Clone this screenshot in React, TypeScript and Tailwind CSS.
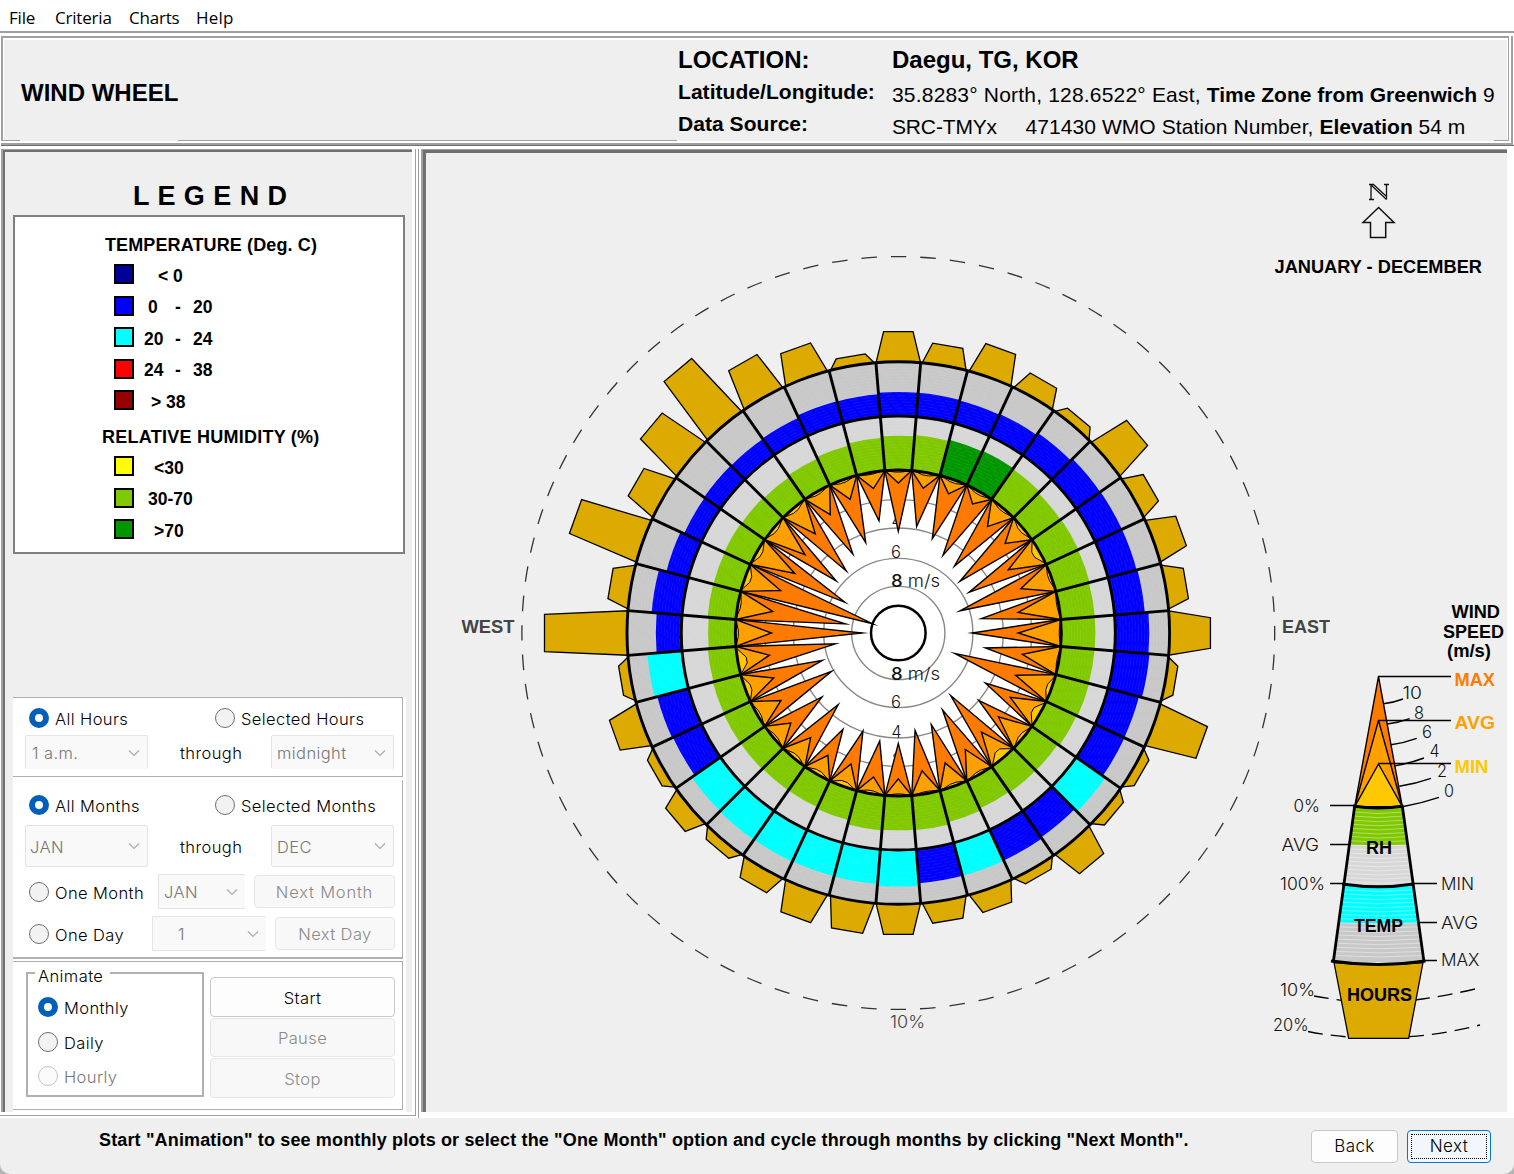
import React from "react";

const CX = 898.3;
const CY = 633;
const R_SPEED = 163;
const R_TEMP = 217;
const R_OUT = 271.3;

const BLUE = "#0000ff";
const CYAN = "#00ffff";
const GREEN = "#80c800";
const DARKGREEN = "#009600";
const GOLD = "#dcaa00";
const MAXC = "#ff7a00";
const AVGC = "#ffa000";
const MINC = "#ffc800";

type Sector = [hours: number, rh: number, temp: number, max: number, avg: number, min: number];

// One entry for every 10 degrees, clockwise from north; all values are radii.
const sectors: Sector[] = [
  [301.8, 197.3, 241, 98.7, 149, 161],
  [291.8, 198.7, 241, 105.3, 145.8, 160],
  [302.3, 200, 240.5, 97.2, 147, 160],
  [291.5, 201, 241.5, 86, 148, 160],
  [281.4, 200, 244, 83.7, 137.5, 160],
  [312, 198, 246.3, 76.2, 138, 159],
  [291.7, 198.5, 246.5, 77.6, 125, 156],
  [301, 198, 246.5, 60.8, 128.6, 160],
  [292.2, 197.2, 247.3, 80.5, 119.5, 161],
  [312.5, 197.1, 251, 69.3, 117.7, 161],
  [281.5, 197, 252, 84.7, 124, 161],
  [323, 197.5, 249, 55, 122.8, 158],
  [281, 196.5, 249.4, 97.4, 127.4, 155],
  [281.7, 194.5, 252.7, 102, 129, 159],
  [301.3, 194.5, 249.3, 77.6, 127.7, 154],
  [281.3, 193.5, 250.7, 85, 132.9, 160],
  [292, 195.7, 251, 94, 136.7, 160],
  [292.3, 198, 251.2, 95.7, 138.5, 161],
  [301.8, 197.3, 253.5, 108, 144.7, 161],
  [302.4, 198.2, 251.8, 106.9, 145, 160],
  [302.6, 193.8, 251.7, 101.3, 138, 158],
  [291.2, 192, 252, 108.4, 140, 159],
  [281.9, 192, 252.4, 90.2, 135, 159],
  [291.2, 192.5, 251.9, 96.5, 139, 160],
  [281.3, 192.6, 248.3, 72.8, 133.8, 160],
  [301.8, 192, 249.3, 76.6, 130.9, 157],
  [281.7, 191.2, 251.8, 59.2, 129.1, 154],
  [354.3, 190.2, 242.5, 30, 124.9, 160],
  [292.4, 191.4, 247.5, 48.3, 125.6, 160],
  [343.6, 191.3, 240, 21, 123.2, 157],
  [302.9, 192, 236.2, 56.7, 117.3, 158],
  [322.7, 191.3, 237, 77, 119.7, 159],
  [343.6, 190.4, 236.6, 77, 127.5, 159],
  [312.3, 192.3, 237.3, 87.5, 135, 160],
  [303, 194, 239.8, 92.8, 140.8, 160],
  [281, 195.9, 239.5, 111.4, 145.5, 161],
];

const humid = [2, 3];
const warm = [13, 16, 18, 19, 20, 21, 22, 23, 26];

// The wheel's directions lean slightly towards the nearest compass axis.
function lean(deg: number) {
  const axis = Math.round(deg / 90) * 90;
  const d = deg - axis;
  return deg - Math.sign(d) * 0.3 * (1 - Math.abs(d) / 45);
}

function pt(deg: number, r: number) {
  const a = (deg * Math.PI) / 180;
  return `${(CX + r * Math.sin(a)).toFixed(2)},${(CY - r * Math.cos(a)).toFixed(2)}`;
}

function band(deg: number, r0: number, r1: number) {
  const a = lean(deg - 5);
  const b = lean(deg + 5);
  return `M${pt(a, r0)} A${r0} ${r0} 0 0 1 ${pt(b, r0)} L${pt(b, r1)} A${r1} ${r1} 0 0 0 ${pt(a, r1)}Z`;
}

// Pulls the tip back by the length of its mitered outline.
function spike(deg: number, tip: number) {
  const len = R_SPEED - tip;
  const inset = (0.65 * Math.hypot(14.2, len)) / 14.2;
  return `${pt(lean(deg - 5), R_SPEED)} ${pt(lean(deg), tip + inset)} ${pt(lean(deg + 5), R_SPEED)}`;
}

const SANS = "'Liberation Sans', Arial, sans-serif";
const LIGHT = "'Inter', 'Noto Sans', sans-serif";

function Bold({ x, x2, y, c = "#000", s = 18, children }: { x: number; x2: number; y: number; c?: string; s?: number; children: string }) {
  return (
    <text x={x} y={y} fontFamily={SANS} fontWeight={700} fontSize={s} fill={c} textLength={x2 - x} lengthAdjust="spacingAndGlyphs">
      {children}
    </text>
  );
}

function Thin({ x, x2, y, c = "#111", s = 17, children }: { x: number; x2: number; y: number; c?: string; s?: number; children: React.ReactNode }) {
  return (
    <text x={x} y={y} fontFamily={LIGHT} fontWeight={300} fontSize={s} fill={c} textLength={x2 - x} lengthAdjust="spacingAndGlyphs">
      {children}
    </text>
  );
}

function Wheel() {
  return (
    <g>
      <circle cx={CX} cy={CY} r={376.4} fill="none" stroke="#333" strokeWidth="1.3" strokeDasharray="15.5 14.06" strokeDashoffset="8" />
      <g fill={GOLD} stroke="#000" strokeWidth="1.3">
        {sectors.map((s, i) => {
          const h = i === 0 || i === 9 || i === 18 ? 2.8 : 3;
          const d = lean(i * 10);
          return <polygon key={i} points={`${pt(d - 4.7, R_OUT)} ${pt(d - h, s[0])} ${pt(d + h, s[0])} ${pt(d + 4.7, R_OUT)}`} />;
        })}
      </g>
      <circle cx={CX} cy={CY} r={R_OUT} fill="#c8c8c8" />
      {sectors.map((s, i) => (
        <path key={i} d={band(i * 10, R_TEMP, s[2])} fill={warm.includes(i) ? CYAN : BLUE} />
      ))}
      <circle cx={CX} cy={CY} r={R_TEMP} fill="#d7d7d7" />
      {sectors.map((s, i) => (
        <path key={i} d={band(i * 10, R_SPEED, s[1])} fill={humid.includes(i) ? DARKGREEN : GREEN} />
      ))}
      <g fill="none" stroke="#fff" strokeWidth="0.6" strokeOpacity="0.13" strokeDasharray="9 3">
        {Array.from({ length: 34 }, (_, i) => (
          <circle key={i} cx={CX} cy={CY} r={167 + i * 3.05} />
        ))}
      </g>
      <circle cx={CX} cy={CY} r={R_SPEED} fill="#fff" />
      <g fill="none" stroke="#888" strokeWidth="1.4">
        {[133.4, 105, 74.6, 46.6].map((r) => (
          <circle key={r} cx={CX} cy={CY} r={r} />
        ))}
      </g>
      <Thin x={892} x2={901} y={497.5}>2</Thin>
      <Thin x={891.5} x2={901.5} y={526.7}>4</Thin>
      <Thin x={891} x2={901} y={557.7}>6</Thin>
      <Thin x={891} x2={940} y={586.5}><tspan fontWeight={500}>8</tspan> m/s</Thin>
      <Thin x={891} x2={940} y={680}><tspan fontWeight={500}>8</tspan> m/s</Thin>
      <Thin x={891} x2={901} y={707.5}>6</Thin>
      <Thin x={891.5} x2={901.5} y={737.5}>4</Thin>
      <Thin x={892} x2={901} y={766}>2</Thin>
      <g stroke="#000" strokeWidth="1.4" strokeMiterlimit="30">
        {sectors.map((s, i) => (
          <g key={i}>
            <polygon points={spike(i * 10, s[3])} fill={MAXC} />
            <polygon points={spike(i * 10, s[4])} fill={AVGC} />
            <polygon
              points={`${pt(i * 10 - 4.8, R_SPEED)} ${pt(i * 10 - 1.2, s[5])} ${pt(i * 10 + 1, s[5])} ${pt(i * 10 + 4.8, R_SPEED)}`}
              fill={MINC}
              strokeWidth="1"
            />
          </g>
        ))}
      </g>
      <circle cx={CX} cy={CY} r={27.3} fill="none" stroke="#000" strokeWidth="2.5" />
      <g fill="none" stroke="#000" strokeWidth="2.9">
        <circle cx={CX} cy={CY} r={R_SPEED} />
        <circle cx={CX} cy={CY} r={R_TEMP} />
        <circle cx={CX} cy={CY} r={R_OUT} />
        {sectors.map((_, i) => (
          <path key={i} d={`M${pt(lean(i * 10 + 5), R_SPEED)} L${pt(lean(i * 10 + 5), R_OUT)}`} />
        ))}
      </g>
      <Bold x={461.5} x2={514.5} y={632.7} c="#444">WEST</Bold>
      <Bold x={1282} x2={1330} y={632.7} c="#444">EAST</Bold>
      <Thin x={890} x2={925} y={1028} c="#444">10%</Thin>
    </g>
  );
}

function Compass() {
  return (
    <g fill="none" stroke="#111" strokeWidth="1.3">
      <path d="M1369 184.5h5M1384 184.5h5M1369 199.5h5M1371 184.5v15M1386.500 184.5v15M1370.500 184.500L1386.500 199.500M1373.500 184.500L1386.500 196.500" />
      <path d="M1378.600 207.500L1394 222.500H1385.700V237.500H1370.500V222.500H1363Z" strokeWidth="1.5" />
    </g>
  );
}

const scaleTicks: [number, number, number, number][] = [
  [1383.3, 703.7, 1403, 699],
  [1387.3, 724, 1409.7, 718.7],
  [1391, 744.7, 1416.7, 738.3],
  [1395.3, 765.7, 1424, 758],
  [1399.3, 786.3, 1431, 778.3],
  [1402.3, 806.7, 1439, 797.3],
];

function Key() {
  return (
    <g>
      <g fill="none" stroke="#000" strokeWidth="1.3">
        <path d="M1330 805.500H1356M1330 844.500H1350M1330 883.500H1346M1412 883.500H1437M1418 922.500H1437M1423 960.500H1437" />
        <path d="M1314 996Q1328 998.500 1343 1000.500M1415 1000Q1445 996 1475 989M1308 1031.500Q1328 1035.500 1349 1037M1409 1036.700Q1445 1034 1480 1025" strokeDasharray="15 8" />
      </g>
      <path d="M1355 806L1349.500 845H1407.500L1402.300 806Z" fill={GREEN} />
      <path d="M1349.500 845L1344 884Q1378.500 890 1413 884L1407.500 845Z" fill="#d7d7d7" />
      <path d="M1344 884Q1378.500 890 1413 884L1418.500 923H1338.800Z" fill={CYAN} />
      <path d="M1338.800 923L1333.300 962H1424L1418.500 923Z" fill="#c8c8c8" />
      <g fill="none" stroke="#fff" strokeWidth="0.9" strokeOpacity="0.45">
        {Array.from({ length: 36 }, (_, i) => {
          const y = 812 + i * 4.1;
          const w = 24 + ((y - 806) * 21.3) / 156;
          return <path key={i} d={`M${1378.6 - w} ${y}Q1378.600 ${y + 3} ${1378.6 + w} ${y}`} />;
        })}
      </g>
      <path d="M1334 962.500Q1378.500 967 1423 962.500L1408.700 1038.300H1348.700Z" fill={GOLD} stroke="#000" strokeWidth="1.3" />
      <g stroke="#000" strokeWidth="1.4" strokeLinejoin="round">
        <path d="M1354.700 806.700L1378.500 676.500L1402.300 806.700Z" fill={MAXC} />
        <path d="M1354.700 806.700L1378.500 720.500L1402.300 806.700Z" fill={AVGC} />
        <path d="M1354.700 806.700L1378.500 764L1402.300 806.700Z" fill={MINC} />
        <path d="M1378.500 676.500H1451M1378.500 720.500H1451M1378.500 763.500H1451" fill="none" />
        {scaleTicks.map(([x1, y1, x2, y2]) => (
          <path key={y1} d={`M${x1} ${y1}Q${(x1 + x2) / 2} ${(y1 + y2) / 2 + 1.5} ${x2} ${y2}`} fill="none" />
        ))}
      </g>
      <g fill="none" stroke="#000" strokeWidth="2.8">
        <path d="M1354.700 806L1333.300 962M1402.300 806L1424 962" />
        <path d="M1353 806Q1378.500 810 1403.500 806M1342 884Q1378.500 889.500 1414 884M1331 961Q1378.500 968 1425.500 961" />
      </g>
      <Bold x={1366} x2={1392} y={853.5}>RH</Bold>
      <Bold x={1354} x2={1403} y={931.8}>TEMP</Bold>
      <Bold x={1347} x2={1412} y={1000.5}>HOURS</Bold>
      <Bold x={1451.500} x2={1500} y={617.7}>WIND</Bold>
      <Bold x={1443} x2={1504} y={638}>SPEED</Bold>
      <Bold x={1447} x2={1491} y={657}>(m/s)</Bold>
      <Bold x={1454.500} x2={1495} y={686} c={MAXC}>MAX</Bold>
      <Bold x={1454.500} x2={1495} y={728.7} c={AVGC}>AVG</Bold>
      <Bold x={1454.500} x2={1488.500} y={772.7} c={MINC}>MIN</Bold>
      <Thin x={1402.500} x2={1422} y={698.7}>10</Thin>
      <Thin x={1414} x2={1424} y={719}>8</Thin>
      <Thin x={1422} x2={1432} y={737.7}>6</Thin>
      <Thin x={1429.500} x2={1439.500} y={757.3}>4</Thin>
      <Thin x={1437} x2={1447} y={776.7}>2</Thin>
      <Thin x={1444} x2={1454} y={796.7}>0</Thin>
      <Thin x={1293.500} x2={1320} y={811.7}>0%</Thin>
      <Thin x={1281.500} x2={1319} y={850.7}>AVG</Thin>
      <Thin x={1280} x2={1325} y={889.5}>100%</Thin>
      <Thin x={1441} x2={1474} y={889.5}>MIN</Thin>
      <Thin x={1441} x2={1478} y={928.7}>AVG</Thin>
      <Thin x={1441} x2={1479.500} y={966.3}>MAX</Thin>
      <Thin x={1280} x2={1315} y={995.7}>10%</Thin>
      <Thin x={1273} x2={1308.500} y={1030.7}>20%</Thin>
    </g>
  );
}

function Radio({ on, off }: { on?: boolean; off?: boolean }) {
  if (on) return <span className="block size-5 shrink-0 rounded-full border-6 border-[#005fb8] bg-white" />;
  if (off) return <span className="block size-5 shrink-0 rounded-full border border-[#c4c4c4] bg-[#fafafa]" />;
  return <span className="block size-5 shrink-0 rounded-full border border-[#707070] bg-[#f2f2f2]" />;
}

function Choice({ label, on, off, className = "" }: { label: string; on?: boolean; off?: boolean; className?: string }) {
  return (
    <div className={`flex items-center gap-[6px] whitespace-nowrap ${off ? "text-[#777]" : "text-black"} ${className}`}>
      <Radio on={on} off={off} />
      <span className="relative top-px">{label}</span>
    </div>
  );
}

function Select({ label, className = "" }: { label: string; className?: string }) {
  return (
    <div className={`flex shrink-0 items-center justify-between rounded-[2px] border border-[#e4e4e4] bg-[#f9f9f9] pr-[7px] text-[#777] ${className}`}>
      <span className="pt-px">{label}</span>
      <svg width="12" height="8" viewBox="0 0 12 8" fill="none" stroke="#aaa" strokeWidth="1.200">
        <path d="M1 1.500L6 6.500L11 1.500" />
      </svg>
    </div>
  );
}

function Push({ label, off, className = "" }: { label: string; off?: boolean; className?: string }) {
  return (
    <button
      className={`flex shrink-0 items-center justify-center rounded-[4px] border pt-px ${off ? "border-[#e6e6e6] bg-[#f8f8f8] text-[#8a8a8a]" : "border-[#c8c8c8] bg-[#fdfdfd] text-black"} ${className}`}
    >
      {label}
    </button>
  );
}

function Swatch({ color, pad, children }: { color: string; pad: string; children: React.ReactNode }) {
  return (
    <div className="flex h-5 items-center">
      <span className={`block size-5 shrink-0 border-2 border-black ${color}`} />
      <span className={`relative top-[1.500px] flex whitespace-pre ${pad}`}>{children}</span>
    </div>
  );
}

function Legend() {
  return (
    <div className="flex flex-col font-['Liberation_Sans',Arial,sans-serif] font-bold text-black">
      <div className="mt-[32px] h-[31px] whitespace-pre pl-[128px] text-[27px] leading-[25px] tracking-[0.45px]">L E G E N D</div>
      <div className="ml-2 h-[339px] w-[392px] border-2 border-[#808080] bg-white text-[17.500px] leading-5">
        <div className="mt-[17px] whitespace-nowrap pl-[90px] text-[18px] leading-[22px] tracking-[0.12px]">TEMPERATURE (Deg. C)</div>
        <div className="mt-2 flex flex-col gap-[11.5px] pl-[99px]">
          <Swatch color="bg-[#000096]" pad="pl-6">{"< 0"}</Swatch>
          <Swatch color="bg-[#0000ff]" pad="pl-[14px]">
            <span className="w-[27px]">0</span>
            <span className="w-[18px]">-</span>20
          </Swatch>
          <Swatch color="bg-[#00ffff]" pad="pl-[10px]">
            <span className="w-[31px]">20</span>
            <span className="w-[18px]">-</span>24
          </Swatch>
          <Swatch color="bg-[#ff0000]" pad="pl-[10px]">
            <span className="w-[31px]">24</span>
            <span className="w-[18px]">-</span>38
          </Swatch>
          <Swatch color="bg-[#960000]" pad="pl-[17px]">{"> 38"}</Swatch>
        </div>
        <div className="mt-4 whitespace-nowrap pl-[87px] text-[18px] leading-[22px] tracking-[0.25px]">RELATIVE HUMIDITY (%)</div>
        <div className="mt-2 flex flex-col gap-[11.5px] pl-[99px]">
          <Swatch color="bg-[#ffff00]" pad="pl-5">{"<30"}</Swatch>
          <Swatch color="bg-[#80c800]" pad="pl-[14px]">30-70</Swatch>
          <Swatch color="bg-[#009600]" pad="pl-5">{">70"}</Swatch>
        </div>
      </div>
    </div>
  );
}

function Controls() {
  return (
    <div className="mt-[143px] ml-2 flex h-[415px] w-[393px] flex-col bg-white font-['Inter','Noto_Sans',sans-serif] text-[16.500px] leading-5 font-light tracking-[0.4px]">
      <div className="h-[80px] w-[390px] border-t border-r border-b border-[#b0b0b0]">
        <div className="mt-[10px] flex pl-4">
          <Choice label="All Hours" on className="w-[186px]" />
          <Choice label="Selected Hours" />
        </div>
        <div className="mt-[7px] flex items-center pl-3">
          <Select label="1 a.m." className="h-[34px] w-[123px] border-b-0 pl-[6px]" />
          <span className="w-[123px] pt-px pl-[32px]">through</span>
          <Select label="midnight" className="h-[34px] w-[123px] border-b-0 pl-[5px]" />
        </div>
      </div>
      <div className="mt-[3px] h-[179px] w-[390px] border-r border-b-2 border-[#b0b0b0]">
        <div className="mt-[15px] flex pl-4">
          <Choice label="All Months" on className="w-[186px]" />
          <Choice label="Selected Months" />
        </div>
        <div className="mt-[10px] flex items-center pl-3">
          <Select label="JAN" className="h-[42px] w-[123px] pl-1" />
          <span className="w-[123px] pt-px pl-[32px]">through</span>
          <Select label="DEC" className="h-[42px] w-[123px] pl-[5px]" />
        </div>
        <div className="mt-[7px] flex items-center pl-4">
          <Choice label="One Month" className="w-[129px]" />
          <Select label="JAN" className="h-[35px] w-[87px] border-r-0 pl-[5px]" />
          <Push label="Next Month" off className="ml-[9px] h-[33px] w-[141px] tracking-[0.8px]" />
        </div>
        <div className="mt-[7px] flex items-center pl-4">
          <Choice label="One Day" className="w-[123px]" />
          <Select label="1" className="h-[35px] w-[114px] border-r-0 pl-[25px]" />
          <Push label="Next Day" off className="ml-[9px] h-[33px] w-[120px]" />
        </div>
      </div>
      <div className="mt-[2px] flex h-[149px] w-[390px] border-t border-r border-b border-[#b0b0b0]">
        <div className="mt-[10px] ml-[13px] h-[125px] w-[178px] border-2 border-[#b0b0b0]">
          <div className="-mt-[8px] ml-[7px] h-5 w-[75px] bg-white pl-[3px]">Animate</div>
          <Choice label="Monthly" on className="mt-[11px] ml-[10px]" />
          <Choice label="Daily" className="mt-[15px] ml-[10px]" />
          <Choice label="Hourly" off className="mt-[14px] ml-[10px]" />
        </div>
        <div className="mt-[15px] ml-[6px] flex flex-col">
          <Push label="Start" className="h-10 w-[185px]" />
          <Push label="Pause" off className="mt-px h-[39px] w-[185px]" />
          <Push label="Stop" off className="mt-px h-10 w-[185px]" />
        </div>
      </div>
    </div>
  );
}

function Header() {
  return (
    <div className="mt-[3px] ml-px flex h-[110px] flex-col border-b border-[#707070] pr-px">
      <div className="flex h-[109px] flex-col border-r-2 border-b-2 border-[#a0a0a0]">
        <div className="mr-[2px] h-[105px] border-t-2 border-r border-l-2 border-[#a0a0a0]">
          <div className="flex h-[102px] border-t-2 border-r border-l border-white bg-[#efefef] font-['Liberation_Sans',Arial,sans-serif] text-[21px] leading-8 whitespace-pre text-black">
            <div className="mt-[37px] ml-[17px] w-[657px] text-[24px] font-bold">WIND WHEEL</div>
            <div className="mt-[3.700px] w-[214px] font-bold">
              <div className="text-[24px]">LOCATION:</div>
              <div className="tracking-[0.05px]">Latitude/Longitude:</div>
              <div className="tracking-[0.05px]">Data Source:</div>
            </div>
            <div className="mt-[3.700px]">
              <div className="text-[24px] font-bold">Daegu, TG, KOR</div>
              <div className="mt-[3px]">
                <span className="tracking-[0.19px]">35.8283° North, 128.6522° East, </span>
                <b>Time Zone from Greenwich</b> 9
              </div>
              <div>
                <span className="tracking-[-0.15px]">SRC-TMYx{"     "}</span>
                <span className="tracking-[0.08px]">471430 WMO Station Number, </span>
                <b>Elevation</b> 54 m
              </div>
            </div>
          </div>
          <div className="flex h-px bg-[#efefef]">
            <span className="w-[17px] bg-[#a0a0a0]" />
            <span className="ml-[158px] w-[499px] bg-[#a0a0a0]" />
            <span className="ml-auto w-[14px] bg-[#a0a0a0]" />
          </div>
        </div>
      </div>
    </div>
  );
}

export default function App() {
  return (
    <div className="flex h-[1174px] w-[1514px] flex-col overflow-hidden bg-white">
      <div className="flex h-[33px] shrink-0 border-b-2 border-[#a0a0a0] pl-[9px] font-['Open_Sans','Noto_Sans',sans-serif] text-[17px] leading-[35px] tracking-[-0.2px] text-black">
        <span className="w-[46px]">File</span>
        <span className="w-[74px]">Criteria</span>
        <span className="w-[67px]">Charts</span>
        <span className="tracking-[0.2px]">Help</span>
      </div>
      <Header />
      <div className="mt-[3px] flex h-[969px] shrink-0">
        <div className="flex w-[419px] border-r border-b-0 border-[#a0a0a0]">
          <div className="flex h-[967px] w-[416px] border-r border-b border-[#a0a0a0] pl-px">
            <div className="h-[963px] w-[411px] border-t border-l-2 border-[#a0a0a0]">
              <div className="h-[962px] border-t-2 border-l-2 border-[#707070] bg-[#efefef]">
                <Legend />
                <Controls />
              </div>
            </div>
          </div>
        </div>
        <div className="ml-[2px] h-[963px] w-[1086px] border-t border-l-2 border-[#a0a0a0]">
          <div className="h-[962px] border-t-3 border-l-3 border-[#707070] bg-[#efefef]">
            <svg width="1081" height="959" viewBox="426 153 1081 959" className="block">
              <Wheel />
              <Compass />
              <Bold x={1274.5} x2={1482} y={272.7}>JANUARY - DECEMBER</Bold>
              <Key />
            </svg>
          </div>
        </div>
      </div>
      <div className="h-[56px] shrink-0 bg-[#b4b4b4]">
        <div className="flex h-full rounded-b-[10px] bg-[#efefef]">
          <div className="mt-[11px] ml-[99px] w-[1212px] font-['Liberation_Sans',Arial,sans-serif] text-[18px] leading-[22px] font-bold tracking-[0.15px] whitespace-nowrap text-black">
            Start "Animation" to see monthly plots or select the "One Month" option and cycle through months by clicking "Next Month".
          </div>
          <div className="mt-3 flex gap-[9px] font-['Inter','Noto_Sans',sans-serif] text-[17px] font-light tracking-[0.4px]">
            <Push label="Back" className="h-[33px] w-[87px]" />
            <button className="h-[33px] w-[84px] rounded-[4px] border border-[#0078d4] bg-[#f1f7fc] p-[3px] text-black">
              <span className="flex h-full items-center justify-center border border-dotted border-black pt-px">Next</span>
            </button>
          </div>
        </div>
      </div>
    </div>
  );
}
